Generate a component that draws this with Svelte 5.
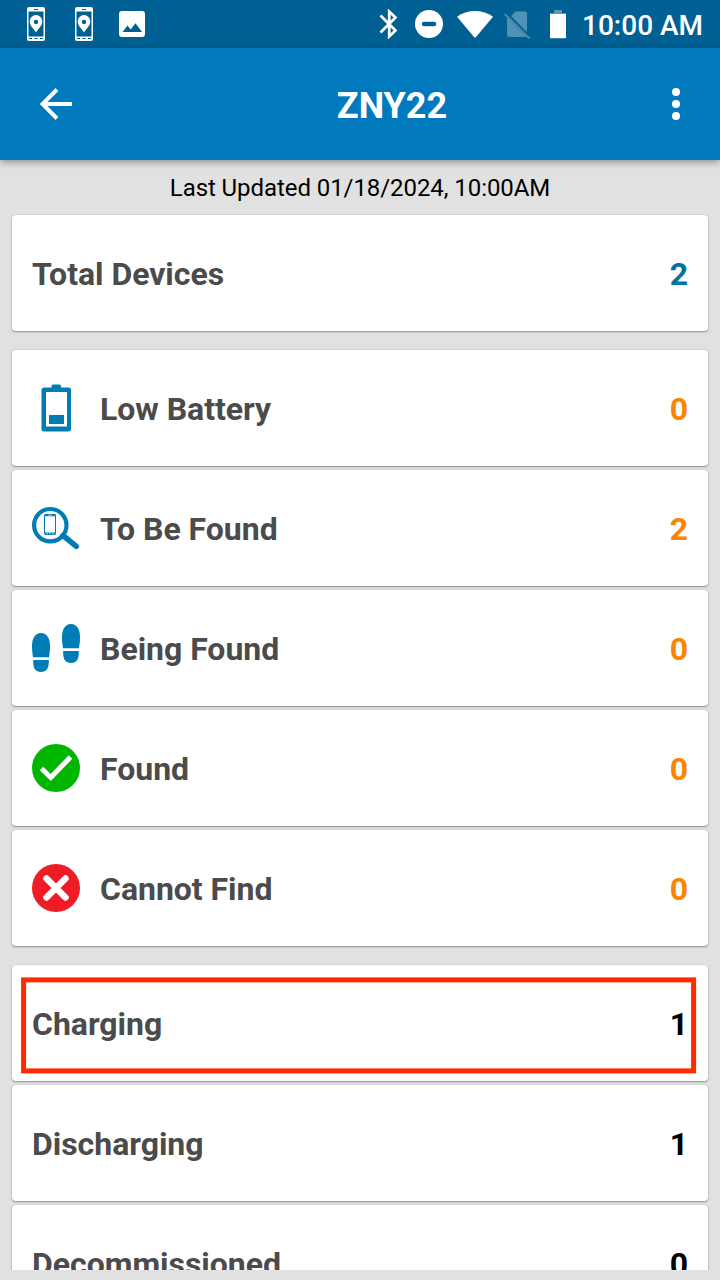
<script>
  const groups = [
    [{ label: 'Total Devices', count: 2, tone: 'blue' }],
    [
      { label: 'Low Battery', count: 0, tone: 'orange', icon: 'battery' },
      { label: 'To Be Found', count: 2, tone: 'orange', icon: 'search' },
      { label: 'Being Found', count: 0, tone: 'orange', icon: 'steps' },
      { label: 'Found', count: 0, tone: 'orange', icon: 'check' },
      { label: 'Cannot Find', count: 0, tone: 'orange', icon: 'cross' }
    ],
    [
      { label: 'Charging', count: 1, tone: 'black', highlighted: true },
      { label: 'Discharging', count: 1, tone: 'black' },
      { label: 'Decommissioned', count: 0, tone: 'black' }
    ]
  ];
</script>

{#snippet phonePin()}
  <svg width="18" height="34" viewBox="0 0 18 34">
    <path fill="#fff" fill-rule="evenodd" d="M2 0h14a2 2 0 0 1 2 2v30a2 2 0 0 1-2 2H2a2 2 0 0 1-2-2V2a2 2 0 0 1 2-2zM1.500 4.500v25h15v-25zM7 2v1h4V2z" />
    <path fill="#fff" fill-rule="evenodd" d="M9 8a6.300 6.300 0 0 0-6.300 6.500C2.700 18.500 6 20.500 9 25.500c3-5 6.300-7 6.300-11A6.300 6.300 0 0 0 9 8zm0 4.700a2.200 2.200 0 1 1 0 4.400 2.200 2.200 0 0 1 0-4.400z" />
    <path stroke="#006093" d="M2 31.500h3M7.500 31.500h3M13 31.500h3" />
  </svg>
{/snippet}

<div class="screen">
  <div class="status">
    <div class="notices">
      {@render phonePin()}
      {@render phonePin()}
      <svg class="image" width="26" height="26" viewBox="0 0 26 26">
        <rect width="26" height="26" rx="3" fill="#fff" />
        <path d="M3.500 21l5-6.500 3.200 4 4.800-6.300L23 21z" fill="#006093" />
      </svg>
    </div>
    <div class="system">
      <svg width="20" height="30" viewBox="0 0 20 30" fill="none" stroke="#fff" stroke-width="2.700">
        <path d="M1.500 6.500l15 15-6.300 6V2.500l6.300 6-15 15" />
      </svg>
      <svg class="dnd" width="28" height="28" viewBox="0 0 28 28">
        <circle cx="14" cy="14" r="14" fill="#fff" />
        <path d="M9 14h10" stroke="#006093" stroke-width="4.500" stroke-linecap="round" />
      </svg>
      <svg class="wifi" width="36" height="27" viewBox="0 0 36 27">
        <path d="M0 5.700C10-1.900 26-1.900 36 5.700L19 26q-1 1-2 0z" fill="#fff" />
      </svg>
      <svg class="sim" width="27" height="29" viewBox="0 0 27 29">
        <path d="M11.500 1.500H21a2 2 0 0 1 2 2V22.300L7 6zM3 7.500L22.500 27H5a2 2 0 0 1-2-2z" fill="#5091b5" />
        <path d="M.7 4L25.500 28.500" stroke="#478bb0" stroke-width="2" />
      </svg>
      <svg class="cell" width="16" height="30" viewBox="0 0 16 30">
        <path d="M4 1h8v3h4v2H0V4h4z" fill="#5a99bb" />
        <path d="M0 5h16v23.500a.8.8 0 0 1-.8.800H.8a.8.8 0 0 1-.8-.8z" fill="#fff" />
      </svg>
      <span class="clock">10:00 AM</span>
    </div>
  </div>

  <header>
    <svg width="32" height="32" viewBox="0 0 32 32" fill="none" stroke="#fff" stroke-width="4">
      <path d="M32 16H3M17 1.500L2.500 16 17 30.500" />
    </svg>
    <h1>ZNY22</h1>
    <svg width="8" height="32" viewBox="0 0 8 32" fill="#fff">
      <circle cx="4" cy="4" r="4" /><circle cx="4" cy="16" r="4" /><circle cx="4" cy="28" r="4" />
    </svg>
  </header>

  <main>
    <p>Last Updated 01/18/2024, 10:00AM</p>
    <div class="groups">
      {#each groups as group}
        <section>
          {#each group as row}
            <div class="card">
              {#if row.icon}
                <svg class="icon" width="48" height="48" viewBox="0 0 48 48">
                  {#if row.icon === 'battery'}
                    <path fill="#007cb5" fill-rule="evenodd" d="M12 3.500h7.500V2a1.500 1.500 0 0 1 1.500-1.500h6.500A1.500 1.500 0 0 1 29 2v1.500h7.500a2.500 2.500 0 0 1 2.500 2.500v39a2.500 2.500 0 0 1-2.500 2.500H12A2.500 2.500 0 0 1 9.500 45V6A2.500 2.500 0 0 1 12 3.500zM14 8v34.500h21V8z" />
                    <path fill="#007cb5" d="M17 31h15v9H17z" />
                  {:else if row.icon === 'search'}
                    <g fill="none" stroke="#007cb5">
                      <circle cx="18.300" cy="21.200" r="16.200" stroke-width="4.200" />
                      <path d="M31 31.500L44.300 42.300" stroke-width="5.500" stroke-linecap="round" />
                      <rect x="12.500" y="10.500" width="11" height="20" rx="1.500" stroke-width="1" />
                      <path d="M12.500 11.300h11M12.500 29.600h11" stroke-width="2" />
                    </g>
                    <path d="M16 11.300h4M14 29.700h2M17 29.700h2M20 29.700h2" stroke="#b7dcec" stroke-width=".8" />
                  {:else if row.icon === 'steps'}
                    <g fill="#007cb5">
                      <path d="M9 9C3 9 0 14.500 0 22c0 4.500.5 7.500 1 11.300h16C17.500 29.500 18 26.500 18 22 18 14.500 15 9 9 9z" />
                      <path d="M1.200 36h15.600c.3 7-1.300 12-7.800 12S.9 43 1.200 36z" />
                      <path d="M39 0c-6 0-9 5.500-9 13 0 4.500.5 7.500 1 11.300h16C47.500 20.500 48 17.500 48 13 48 5.500 45 0 39 0z" />
                      <path d="M31.200 27h15.600c.3 7-1.300 12-7.800 12s-8.100-5-7.800-12z" />
                    </g>
                  {:else if row.icon === 'check'}
                    <circle cx="24" cy="24" r="24" fill="#00b600" />
                    <path d="M9.500 24.500L18.800 33.500 38.500 13" fill="none" stroke="#fff" stroke-width="5" />
                  {:else}
                    <circle cx="24" cy="24" r="24" fill="#ee1c25" />
                    <path d="M14.500 14.500l19 19M33.500 14.500l-19 19" stroke="#fff" stroke-width="6.500" stroke-linecap="round" />
                  {/if}
                </svg>
              {/if}
              <span class="label">{row.label}</span>
              <span class="count {row.tone}">{row.count}</span>
              {#if row.highlighted}<div class="highlight"></div>{/if}
            </div>
          {/each}
        </section>
      {/each}
    </div>
  </main>
</div>

<style>
  :global(body) { background: #e1e1e1; }
  .screen {
    width: 720px;
    height: 1280px;
    display: flex;
    flex-direction: column;
    overflow: hidden;
    background: #e1e1e1;
    font-family: Roboto, sans-serif;
  }
  svg { display: block; flex: none; }
  .status {
    height: 48px;
    flex: none;
    display: flex;
    justify-content: space-between;
    background: #006093;
    color: #fff;
  }
  .notices { display: flex; align-items: center; gap: 30px; padding-left: 27px; }
  .image { margin-left: -4px; }
  .system { display: flex; align-items: center; padding-right: 17px; }
  .dnd { margin-left: 16px; }
  .wifi { margin-left: 14px; }
  .sim { margin-left: 11px; }
  .cell { margin-left: 19px; margin-top: -1px; }
  .clock { width: 121px; margin-left: 16px; padding-top: 2px; font-size: 28px; font-weight: 500; white-space: nowrap; }
  header {
    height: 112px;
    flex: none;
    display: flex;
    align-items: center;
    justify-content: space-between;
    box-sizing: border-box;
    padding: 0 40px;
    background: #007abc;
    color: #fff;
    box-shadow: 0 2px 7px rgba(0, 0, 0, .38);
    position: relative;
  }
  h1 { margin: 3px 0 0 40px; font-size: 36px; line-height: 42px; font-weight: 700; }
  main { height: 1110px; flex: none; overflow: hidden; }
  p { margin: 0; height: 55px; line-height: 56px; text-align: center; font-size: 24px; letter-spacing: -.07px; color: #000; }
  .groups { display: flex; flex-direction: column; gap: 19px; padding: 0 12px; }
  section { display: flex; flex-direction: column; gap: 4px; }
  .card {
    height: 116px;
    box-sizing: border-box;
    display: flex;
    align-items: center;
    padding: 0 20px;
    border-radius: 4px;
    background: #fff;
    box-shadow: 0 1px 2px rgba(0, 0, 0, .35), 0 0 2px rgba(0, 0, 0, .14);
    position: relative;
  }
  .icon { margin-right: 20px; }
  .label, .count { padding-top: 2px; font-size: 32px; line-height: 38px; font-weight: 700; }
  .label { flex: 1; color: #4b4b4b; letter-spacing: -.03px; }
  .blue { color: #0073a4; }
  .orange { color: #fb8500; }
  .black { color: #000; }
  .highlight {
    position: absolute;
    left: 9px;
    top: 12px;
    right: 12px;
    bottom: 8px;
    border: 5px solid #ff2b00;
    transform: translate(.1px, .4px);
  }
</style>
